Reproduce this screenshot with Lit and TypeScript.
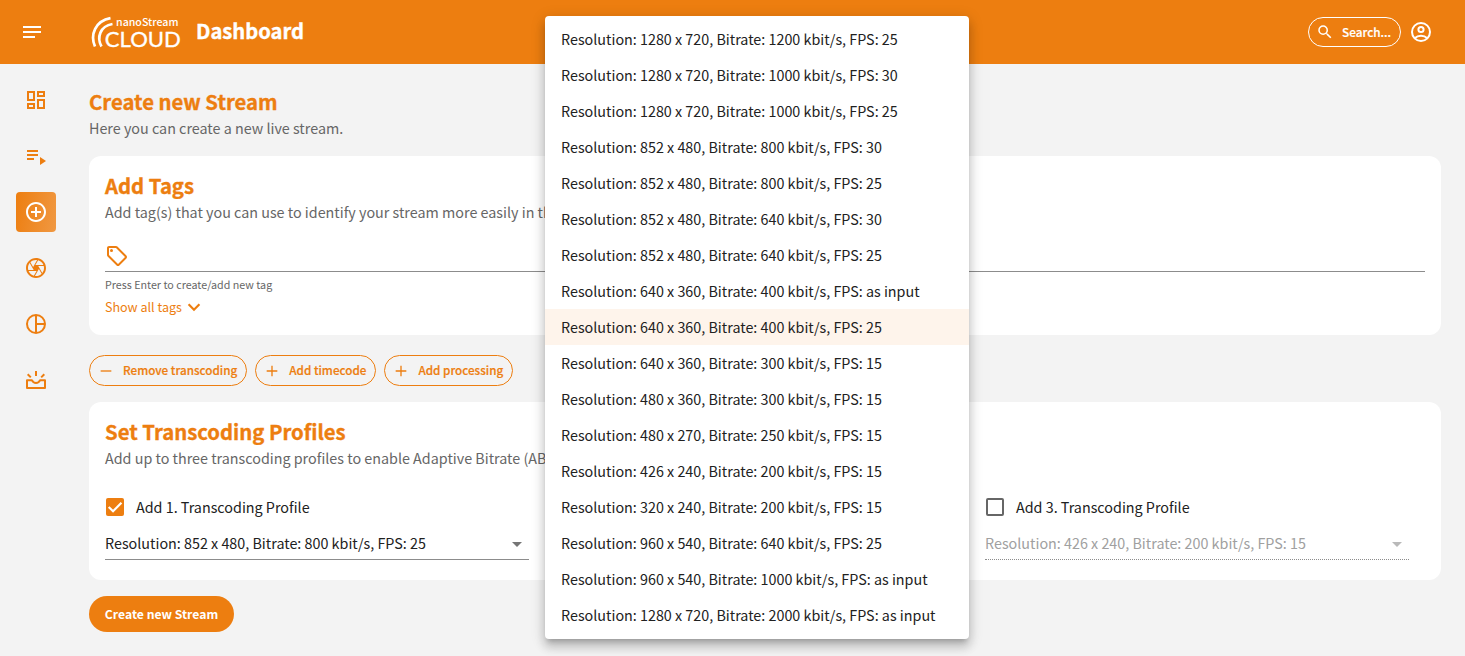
import { LitElement, html, css, svg } from "lit";
import { customElement } from "lit/decorators.js";
import { classMap } from "lit/directives/class-map.js";

const OPTIONS = [
  "Resolution: 1280 x 720, Bitrate: 1200 kbit/s, FPS: 25",
  "Resolution: 1280 x 720, Bitrate: 1000 kbit/s, FPS: 30",
  "Resolution: 1280 x 720, Bitrate: 1000 kbit/s, FPS: 25",
  "Resolution: 852 x 480, Bitrate: 800 kbit/s, FPS: 30",
  "Resolution: 852 x 480, Bitrate: 800 kbit/s, FPS: 25",
  "Resolution: 852 x 480, Bitrate: 640 kbit/s, FPS: 30",
  "Resolution: 852 x 480, Bitrate: 640 kbit/s, FPS: 25",
  "Resolution: 640 x 360, Bitrate: 400 kbit/s, FPS: as input",
  "Resolution: 640 x 360, Bitrate: 400 kbit/s, FPS: 25",
  "Resolution: 640 x 360, Bitrate: 300 kbit/s, FPS: 15",
  "Resolution: 480 x 360, Bitrate: 300 kbit/s, FPS: 15",
  "Resolution: 480 x 270, Bitrate: 250 kbit/s, FPS: 15",
  "Resolution: 426 x 240, Bitrate: 200 kbit/s, FPS: 15",
  "Resolution: 320 x 240, Bitrate: 200 kbit/s, FPS: 15",
  "Resolution: 960 x 540, Bitrate: 640 kbit/s, FPS: 25",
  "Resolution: 960 x 540, Bitrate: 1000 kbit/s, FPS: as input",
  "Resolution: 1280 x 720, Bitrate: 2000 kbit/s, FPS: as input",
];
const SELECTED = 8;

const ICONS = {
  menu: svg`<path d="M3 6h18v2H3zM3 11h18v2H3zM3 16h12v2H3z"/>`,
  dashboard: svg`<path d="M19 5v2h-4V5h4M9 5v6H5V5h4m10 8v6h-4v-6h4M9 17v2H5v-2h4M21 3h-8v6h8V3zM11 3H3v10h8V3zm10 8h-8v10h8V11zm-10 4H3v6h8v-6z"/>`,
  playlist: svg`<path d="M3 6h11v2H3zM3 10h11v2H3zM3 14h7v2H3zM16 13v8l6-4z"/>`,
  add: svg`<path d="M13 7h-2v4H7v2h4v4h2v-4h4v-2h-4V7zm-1-5C6.48 2 2 6.48 2 12s4.48 10 10 10 10-4.48 10-10S17.52 2 12 2zm0 18c-4.41 0-8-3.59-8-8s3.59-8 8-8 8 3.59 8 8-3.59 8-8 8z"/>`,
  camera: svg`<path d="M14.25 2.26l-.08-.04-.01.02C13.46 2.09 12.74 2 12 2 6.48 2 2 6.48 2 12s4.48 10 10 10 10-4.48 10-10c0-4.75-3.31-8.72-7.75-9.74zM19.41 9h-7.99l2.71-4.7c2.4.66 4.35 2.42 5.28 4.7zM13.1 4.08L10.27 9l-1.15 2L6.4 6.3C7.84 4.88 9.82 4 12 4c.37 0 .74.03 1.1.08zM5.7 7.09L8.54 12l1.15 2H4.26C4.1 13.36 4 12.69 4 12c0-1.84.64-3.55 1.7-4.91zM4.59 15h7.98l-2.71 4.7c-2.4-.67-4.34-2.42-5.27-4.7zm6.31 4.91L14.89 13l2.72 4.7C16.16 19.12 14.18 20 12 20c-.38 0-.74-.04-1.1-.09zm7.4-3l-4-6.91h5.43c.17.64.27 1.31.27 2 0 1.84-.64 3.55-1.7 4.91z"/>`,
  pie: svg`<path fill="none" stroke="currentColor" stroke-width="2" d="M12 3a9 9 0 1 0 0 18 9 9 0 1 0 0-18zM12 3v18M12 12h9"/>`,
  tray: svg`<path fill="none" stroke="currentColor" stroke-width="2" stroke-linejoin="round" d="M3 12.200h4.900c.8 1.800 2.200 2.800 4.100 2.800s3.300-1 4.100-2.800H21V20H3zM12 3v5M3.700 6.300l3.100 3.100M20.300 6.300l-3.100 3.100"/>`,
  search: svg`<path d="M15.500 14h-.79l-.28-.27A6.471 6.471 0 0 0 16 9.500 6.500 6.500 0 1 0 9.500 16c1.610 0 3.090-.59 4.230-1.570l.27.28v.79l5 4.990L20.490 19l-4.990-5zm-6 0C7.010 14 5 11.990 5 9.500S7.010 5 9.500 5 14 7.010 14 9.500 11.990 14 9.500 14z"/>`,
  account: svg`<g fill="none" stroke="currentColor" stroke-width="2"><circle cx="12" cy="12" r="9"/><circle cx="12" cy="9.500" r="2.600"/><path d="M5.700 18.200c1.600-1.500 3.900-2.400 6.300-2.400s4.700.9 6.300 2.400"/></g>`,
  tag: svg`<path d="M21.410 11.580l-9-9C12.050 2.220 11.550 2 11 2H4c-1.100 0-2 .9-2 2v7c0 .55.22 1.050.59 1.420l9 9c.36.36.86.58 1.410.58s1.050-.22 1.410-.59l7-7c.37-.36.59-.86.59-1.410s-.23-1.060-.59-1.420zM13 20.010L4 11V4h7v-.01l9 9-7 7.020z"/><circle cx="6.500" cy="6.500" r="1.500"/>`,
  chevron: svg`<path fill="none" stroke="currentColor" stroke-width="2.600" d="M5.500 8.800L12 15.200l6.500-6.400"/>`,
  minus: svg`<path d="M4 11h16v2H4z"/>`,
  plus: svg`<path d="M4 11h7V4h2v7h7v2h-7v7h-2v-7H4z"/>`,
  check: svg`<path fill="none" stroke="#fff" stroke-width="2.900" d="M3.600 11.900l5.800 5.800L20.600 6.200"/>`,
};

const icon = (name: keyof typeof ICONS, cls = "") =>
  html`<svg class="icon ${cls}" viewBox="0 0 24 24" fill="currentColor">${ICONS[name]}</svg>`;

@customElement("app-root")
export class AppRoot extends LitElement {
  static styles = css`
    :host {
      display: block;
      position: relative;
      height: 656px;
      overflow: hidden;
      background: #f3f3f3;
      color: #212121;
      font-family: "Noto Sans CJK JP", "Noto Sans", sans-serif;
      font-size: 14.33px;
      line-height: 24px;
      white-space: nowrap;
    }
    * { box-sizing: border-box; }
    .icon { width: 24px; height: 24px; flex: none; display: block; }
    header {
      height: 64px;
      background: #ed7e10;
      color: #fff;
      display: flex;
      align-items: center;
      padding: 0 32px 0 20px;
    }
    .logo { display: block; width: 92px; height: 40px; margin: 0 14px 0 46px; }
    .page { font-size: 20.2px; font-weight: 700; line-height: 30px; flex: 1; padding-bottom: 3px; -webkit-text-stroke: .35px currentColor; }
    .search {
      display: flex; align-items: center;
      height: 30px; width: 93px; padding: 0 0 1px 7px;
      border: 1px solid #fff; border-radius: 15px;
      font-size: 11.8px; font-weight: 500; margin-right: 8px;
      -webkit-text-stroke: .2px currentColor;
    }
    .search .icon { width: 18px; height: 18px; margin-right: 8px; }
    .body { display: flex; }
    nav {
      width: 89px; padding: 16px;
      display: flex; flex-direction: column; gap: 16px;
      color: #ed7e10;
    }
    .nav-item {
      width: 40px; height: 40px; border-radius: 4px;
      display: flex; align-items: center; justify-content: center;
    }
    .nav-item.active { color: #fff; background: linear-gradient(100deg, #ed7e10, #f09842); }
    main { flex: 1; padding: 22px 24px 0 0; }
    h2 { margin: 0; color: #ed7e10; font-size: 20.3px; font-weight: 700; line-height: 30px; padding-bottom: 2px; -webkit-text-stroke: .35px currentColor; }
    .sub { color: #666; line-height: 20px; }
    .card { background: #fff; border-radius: 12px; padding: 14px 16px 0; }
    .tags { height: 179px; margin-top: 18px; }
    .tag-field { margin-top: 22px; height: 28px; border-bottom: 1px solid #8c8c8c; color: #ed7e10; }
    .hint { font-size: 10.73px; line-height: 16px; margin-top: 5px; color: #666; }
    .show { display: flex; align-items: center; color: #ed7e10; font-size: 12.54px; line-height: 20px; margin-top: 4px; }
    .show .icon { width: 20px; height: 20px; margin-left: 2px; }
    .actions { display: flex; gap: 8px; margin: 20px 0 16px; }
    .action {
      display: flex; align-items: center; height: 31px; padding: 0 9px 0 8px;
      border: 1px solid #ed7e10; border-radius: 16px; color: #ed7e10;
      font-size: 11.7px; font-weight: 500;
      -webkit-text-stroke: .2px currentColor;
    }
    .action span { padding-bottom: 2px; }
    .action .icon { width: 16px; height: 16px; margin-right: 9px; }
    .profiles { height: 178px; }
    .grid { display: grid; grid-template-columns: repeat(3, 1fr); margin-top: 27px; }
    .profile { padding-right: 16px; }
    .check { display: flex; align-items: center; height: 24px; }
    .box { width: 18px; height: 18px; border: 2px solid #666; border-radius: 2px; margin: 0 12px 0 1px; display: flex; }
    .box.on { background: #ed7e10; border: 0; }
    .box .icon { width: 18px; height: 18px; }
    .select {
      display: flex; align-items: center; justify-content: space-between;
      height: 29px; margin-top: 12px; padding: 0 7px 4px 0; border-bottom: 1px solid #8c8c8c;
    }
    .select.off { color: #a0a0a0; border-bottom-style: dotted; }
    .arrow { border: 5px solid transparent; border-top-color: #757575; border-bottom: 0; margin-top: 3px; }
    .off .arrow { border-top-color: #b9b9b9; }
    .create {
      display: inline-flex; align-items: center; justify-content: center; width: 145px; height: 36px;
      margin-top: 16px; border-radius: 18px; background: #ed7e10; color: #fff;
      font-size: 12.2px; font-weight: 700;
    }
    .menu {
      position: absolute; left: 545px; top: 16px; width: 424px; height: 623px;
      padding-top: 5px; background: #fff; border-radius: 4px;
      box-shadow: 0 5px 5px -3px rgba(0,0,0,.2), 0 8px 10px 1px rgba(0,0,0,.14), 0 3px 14px 2px rgba(0,0,0,.12);
    }
    .option { height: 36px; line-height: 36px; padding: 0 16px; }
    .option.selected { background: #fef4eb; }
  `;

  private nav() {
    const items: (keyof typeof ICONS)[] = ["dashboard", "playlist", "add", "camera", "pie", "tray"];
    return items.map(
      (n) => html`<div class=${classMap({ "nav-item": true, active: n === "add" })}>${icon(n)}</div>`
    );
  }

  private profile(n: number, on: boolean, value: string) {
    return html`<div class="profile">
      <div class="check">
        <span class=${classMap({ box: true, on })}>${on ? icon("check") : ""}</span>
        <span>Add ${n}. Transcoding Profile</span>
      </div>
      <div class=${classMap({ select: true, off: !on })}>
        <span>${value}</span><span class="arrow"></span>
      </div>
    </div>`;
  }

  render() {
    return html`
      <header>
        ${icon("menu")}
        <svg class="logo" viewBox="90 12 92 40" fill="#fff">
          <g fill="none" stroke="#fff" stroke-width="2.700">
            <path d="M95 46.500C89.800 34.500 95.500 21 110.500 18.200"/>
            <path d="M101.500 46.500C96.500 37.500 100 26 112.500 24"/>
          </g>
          <text x="116" y="25.800" font-size="10" font-weight="500" textLength="62.500" lengthAdjust="spacingAndGlyphs">nanoStream</text>
          <text x="104.800" y="46.500" font-family="Lato" font-size="22" stroke="#fff" stroke-width=".35" textLength="76" lengthAdjust="spacingAndGlyphs">CLOUD</text>
        </svg>
        <div class="page">Dashboard</div>
        <div class="search">${icon("search")}<span>Search...</span></div>
        ${icon("account")}
      </header>
      <div class="body">
        <nav>${this.nav()}</nav>
        <main>
          <h2>Create new Stream</h2>
          <div class="sub">Here you can create a new live stream.</div>
          <section class="card tags">
            <h2>Add Tags</h2>
            <div class="sub">Add tag(s) that you can use to identify your stream more easily in the</div>
            <div class="tag-field">${icon("tag")}</div>
            <div class="hint">Press Enter to create/add new tag</div>
            <div class="show">Show all tags ${icon("chevron")}</div>
          </section>
          <div class="actions">
            <div class="action">${icon("minus")}<span>Remove transcoding</span></div>
            <div class="action">${icon("plus")}<span>Add timecode</span></div>
            <div class="action">${icon("plus")}<span>Add processing</span></div>
          </div>
          <section class="card profiles">
            <h2>Set Transcoding Profiles</h2>
            <div class="sub">Add up to three transcoding profiles to enable Adaptive Bitrate (ABR)</div>
            <div class="grid">
              ${this.profile(1, true, OPTIONS[4])}
              <div class="profile"></div>
              ${this.profile(3, false, OPTIONS[12])}
            </div>
          </section>
          <div class="create">Create new Stream</div>
        </main>
      </div>
      <div class="menu">
        ${OPTIONS.map(
          (o, i) => html`<div class=${classMap({ option: true, selected: i === SELECTED })}>${o}</div>`
        )}
      </div>
    `;
  }
}
